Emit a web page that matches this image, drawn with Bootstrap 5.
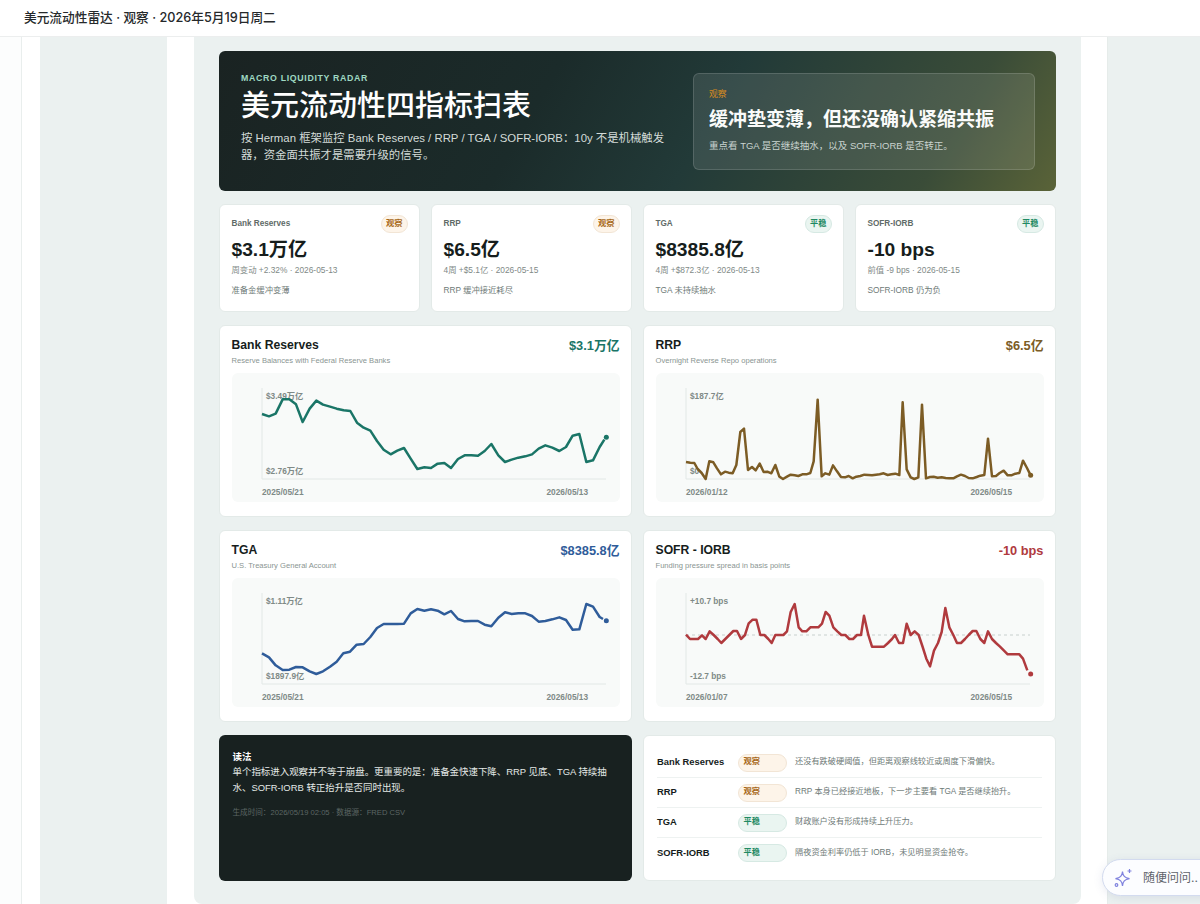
<!DOCTYPE html>
<html lang="zh-CN">
<head>
<meta charset="utf-8">
<title>美元流动性雷达</title>
<link href="https://cdn.jsdelivr.net/npm/bootstrap@5.3.0/dist/css/bootstrap.min.css" rel="stylesheet">
<style>
:root{--tint:#ebf1f0;--ink:#161d1c;--line:#e3eae8;}
html,body{height:904px;overflow:hidden;background:#fff;}
body{font-family:"Liberation Sans","Noto Sans CJK SC",sans-serif;color:var(--ink);position:relative;}
.top-strip{height:37px;padding-left:24px;border-bottom:1px solid #eceeee;font-family:Inter,"Noto Sans CJK SC",sans-serif;font-size:12.7px;font-weight:500;color:#26292b;}
.stage{height:867px;}
.rail-a{width:22px;background:#fcfdfd;border-right:1px solid #e9eeed;flex:none;}
.rail-b{width:18px;flex:none;}
.rail-c{width:127px;background:var(--tint);flex:none;}
.rail-d{width:27px;flex:none;}
.rail-e{width:26px;flex:none;}
.rail-f{flex:1;background:var(--tint);border-left:1px solid #e6ecea;}
.main-panel{width:887px;flex:none;background:var(--tint);border-radius:0 0 8px 8px;padding:14px 25px 24px;row-gap:13px;}
.hero-box{height:140px;flex:none;border-radius:6px;padding:22px 21px 22px 22px;background:linear-gradient(120deg,#1a2322 0%,#1b2b2a 38%,#223a38 58%,#3a4c38 85%,#5a6338 100%);color:#fff;gap:27px;}
.hero-left{width:425px;flex:none;padding-bottom:4.500px;}
.hero-kicker{font-size:8.800px;font-weight:700;letter-spacing:.66px;color:#9fd9c2;line-height:10px;margin-bottom:4px;}
.hero-title{font-size:29px;font-weight:500;line-height:38px;margin:0 0 5px;white-space:nowrap;font-family:"Liberation Sans","Noto Sans CJK SC",sans-serif;}
.hero-text{font-size:11.380px;line-height:17px;color:#d3dbd8;margin:0;}
.state-box{flex:1;border-radius:6px;border:1px solid rgba(255,255,255,.14);background:rgba(255,255,255,.1);padding:13px 15px;height:97px;}
.state-tag{font-size:8.800px;color:#d68a21;line-height:14px;}
.state-title{font-size:19px;font-weight:700;line-height:26px;margin-top:6px;color:#fafbfa;}
.state-note{font-size:9.500px;line-height:14px;color:#c9d3cf;margin-top:6px;}
.kpi-grid{display:grid;grid-template-columns:repeat(4,1fr);gap:11px;}
.tile{background:#fff;border:1px solid var(--line);border-radius:6px;}
.kpi-tile{height:108px;padding:10px 11px 0 11.500px;}
.kpi-name{font-size:8.200px;font-weight:700;color:#5f6b68;}
.kpi-value{font-size:19.200px;font-weight:700;line-height:24px;margin-top:5px;color:#161d1c;}
.kpi-sub{font-size:8.350px;color:#7f8a87;line-height:12px;margin-top:2px;}
.kpi-note{font-size:8.300px;color:#6e7a77;line-height:12px;margin-top:8px;}
.tag-pill{display:inline-flex;align-items:center;border-radius:999px;border:1px solid;font-size:8.200px;font-weight:700;height:18px;padding:0 4.500px;}
.tag-watch{background:#fdf4e9;border-color:#f2e5d5;color:#a8691a;}
.tag-calm{background:#eaf5f1;border-color:#d6e9e3;color:#1f8a63;}
.chart-grid{display:grid;grid-template-columns:repeat(2,1fr);gap:13px 11px;}
.chart-tile{height:192px;padding:11px 11.500px 0;}
.chart-name{font-size:12.200px;font-weight:700;line-height:16px;color:#161d1c;}
.chart-desc{font-size:7.600px;color:#8a9592;line-height:10px;margin-top:3px;}
.chart-num{font-size:12.800px;font-weight:700;line-height:18px;}
.plot-box{display:block;width:388px;height:129px;border-radius:6px;background:#f8faf9;margin-top:7px;}
.plot-box text{font-family:"Liberation Sans","Noto Sans CJK SC",sans-serif;font-size:8.300px;font-weight:700;fill:#7f8a87;}
.bottom-grid{display:grid;grid-template-columns:repeat(2,1fr);gap:11px;height:145px;}
.read-box{background:#182120;border-radius:6px;padding:14px 16px 14px 13.500px;color:#e4e9e7;font-size:9.450px;line-height:16px;}
.read-box strong{display:block;color:#fff;font-size:9.500px;line-height:15px;}
.read-meta{font-size:7.600px;color:#5c6664;line-height:12px;margin-top:11px;}
.sum-tile{padding:12px 13px;}
.sum-row{height:30px;display:grid;grid-template-columns:73px 49px 1fr;column-gap:8px;align-items:center;border-bottom:1px solid #eef2f1;}
.sum-row:last-child{border-bottom:0;}
.sum-name{font-size:9.400px;font-weight:700;color:#161d1c;}
.sum-text{font-size:8.200px;color:#6e7a77;}
.sum-row .tag-pill{justify-content:flex-start;}
.ask-pill{position:absolute;left:1102px;top:859px;width:130px;height:37px;border-radius:19px 0 0 19px;background:#fcfdff;border:1px solid #d3dbef;box-shadow:0 2px 10px rgba(70,90,150,.12);padding-left:11px;gap:9px;color:#5f646b;font-size:12px;font-family:Inter,"Noto Sans CJK SC",sans-serif;white-space:nowrap;}
</style>
</head>
<body>
<div class="top-strip d-flex align-items-center">美元流动性雷达 · 观察 · 2026年5月19日周二</div>
<div class="stage d-flex">
  <div class="rail-a"></div><div class="rail-b"></div><div class="rail-c"></div><div class="rail-d"></div>
  <main class="main-panel d-flex flex-column">
    <section class="hero-box d-flex align-items-center">
      <div class="hero-left">
        <div class="hero-kicker">MACRO LIQUIDITY RADAR</div>
        <h1 class="hero-title">美元流动性四指标扫表</h1>
        <p class="hero-text">按 Herman 框架监控 Bank Reserves / RRP / TGA / SOFR-IORB：10y 不是机械触发器，资金面共振才是需要升级的信号。</p>
      </div>
      <div class="state-box">
        <div class="state-tag">观察</div>
        <div class="state-title">缓冲垫变薄，但还没确认紧缩共振</div>
        <div class="state-note">重点看 TGA 是否继续抽水，以及 SOFR-IORB 是否转正。</div>
      </div>
    </section>

    <section class="kpi-grid">
      <div class="tile kpi-tile">
        <div class="d-flex justify-content-between align-items-center"><span class="kpi-name">Bank Reserves</span><span class="tag-pill tag-watch">观察</span></div>
        <div class="kpi-value">$3.1万亿</div>
        <div class="kpi-sub">周变动 +2.32% · 2026-05-13</div>
        <div class="kpi-note">准备金缓冲变薄</div>
      </div>
      <div class="tile kpi-tile">
        <div class="d-flex justify-content-between align-items-center"><span class="kpi-name">RRP</span><span class="tag-pill tag-watch">观察</span></div>
        <div class="kpi-value">$6.5亿</div>
        <div class="kpi-sub">4周 +$5.1亿 · 2026-05-15</div>
        <div class="kpi-note">RRP 缓冲接近耗尽</div>
      </div>
      <div class="tile kpi-tile">
        <div class="d-flex justify-content-between align-items-center"><span class="kpi-name">TGA</span><span class="tag-pill tag-calm">平稳</span></div>
        <div class="kpi-value">$8385.8亿</div>
        <div class="kpi-sub">4周 +$872.3亿 · 2026-05-13</div>
        <div class="kpi-note">TGA 未持续抽水</div>
      </div>
      <div class="tile kpi-tile">
        <div class="d-flex justify-content-between align-items-center"><span class="kpi-name">SOFR-IORB</span><span class="tag-pill tag-calm">平稳</span></div>
        <div class="kpi-value">-10 bps</div>
        <div class="kpi-sub">前值 -9 bps · 2026-05-15</div>
        <div class="kpi-note">SOFR-IORB 仍为负</div>
      </div>
    </section>

    <section class="chart-grid">
      <div class="tile chart-tile">
        <div class="d-flex justify-content-between"><div><div class="chart-name">Bank Reserves</div><div class="chart-desc">Reserve Balances with Federal Reserve Banks</div></div><div class="chart-num" style="color:#1a7567">$3.1万亿</div></div>
        <svg class="plot-box" viewBox="0 0 388 129">
          <text x="34" y="26">$3.49万亿</text><text x="34" y="100.500">$2.76万亿</text>
          <text x="30" y="122">2025/05/21</text><text x="314.500" y="122">2026/05/13</text>
          <path d="M30 15V106H374" fill="none" stroke="#e2e8e6" stroke-width="1"/>
          <g transform="scale(.33333) translate(-65 -533)">
            <polyline fill="none" stroke="#1a7567" stroke-width="7.500" stroke-linejoin="round" points="155,656 176,663 196,655 217,612 237,612 257,627 277,680 298,640 318,616 338,628 359,634 379,640 400,645 420,647 440,682 460,697 480,706 500,737 520,763 541,777 561,766 581,758 601,790 621,821 642,816 662,818 682,805 702,803 722,818 743,791 763,780 783,780 803,781 823,767 843,746 864,780 884,800 904,793 924,787 945,783 965,777 985,760 1005,750 1026,757 1047,767 1067,755 1087,721 1107,716 1128,800 1148,795 1168,755 1182,733"/>
            <circle cx="1188" cy="726" r="7.500" fill="#1a7567"/>
          </g>
        </svg>
      </div>
      <div class="tile chart-tile">
        <div class="d-flex justify-content-between"><div><div class="chart-name">RRP</div><div class="chart-desc">Overnight Reverse Repo operations</div></div><div class="chart-num" style="color:#7c5c25">$6.5亿</div></div>
        <svg class="plot-box" viewBox="0 0 388 129">
          <text x="34" y="26">$187.7亿</text><text x="34" y="100.500">$0</text>
          <text x="30" y="122">2026/01/12</text><text x="314.500" y="122">2026/05/15</text>
          <path d="M30 15V106H374" fill="none" stroke="#e2e8e6" stroke-width="1"/>
          <g transform="scale(.33333) translate(-47 -145)">
            <polyline fill="none" stroke="#7c5c25" stroke-width="7.500" stroke-linejoin="round" points="137,412 150,414 162,415 172,433 184,445 196,463 207,410 219,413 230,431 242,449 254,441 265,444 277,446 288,421 300,322 311,312 323,436 335,427 346,437 358,417 370,442 381,441 393,446 405,421 417,456 428,463 440,456 451,450 463,452 474,454 486,449 498,449 510,445 520,410 532,225 544,455 555,446 567,450 578,422 590,440 602,457 614,458 625,454 637,461 648,456 660,454 672,450 684,451 695,452 707,450 718,449 730,446 742,451 753,449 765,447 777,451 787,233 799,434 811,458 822,463 834,458 845,240 857,461 869,457 880,456 892,459 904,458 916,460 927,461 939,461 950,455 962,450 974,454 985,460 997,461 1009,457 1020,453 1032,451 1043,342 1055,455 1067,454 1078,445 1090,438 1102,452 1113,452 1125,447 1137,445 1148,408 1160,430 1171,452"/>
            <circle cx="1171" cy="452" r="7.500" fill="#7c5c25"/>
          </g>
        </svg>
      </div>
      <div class="tile chart-tile">
        <div class="d-flex justify-content-between"><div><div class="chart-name">TGA</div><div class="chart-desc">U.S. Treasury General Account</div></div><div class="chart-num" style="color:#2f5c9a">$8385.8亿</div></div>
        <svg class="plot-box" viewBox="0 0 388 129">
          <text x="34" y="26">$1.11万亿</text><text x="34" y="100.500">$1897.9亿</text>
          <text x="30" y="122">2025/05/21</text><text x="314.500" y="122">2026/05/13</text>
          <path d="M30 15V106H374" fill="none" stroke="#e2e8e6" stroke-width="1"/>
          <g transform="scale(.33333) translate(-65 -158)">
            <polyline fill="none" stroke="#2f5c9a" stroke-width="7.500" stroke-linejoin="round" points="155,384 176,396 196,420 217,434 237,433 257,425 277,426 298,438 318,446 338,438 359,424 379,409 399,384 419,379 439,358 460,356 480,335 500,308 520,296 541,296 561,296 581,295 601,264 621,251 642,256 662,252 682,256 702,267 722,257 743,281 763,288 783,287 803,287 823,298 843,303 864,277 884,261 904,266 924,264 945,264 965,272 985,289 1005,287 1026,282 1047,276 1067,284 1087,313 1107,312 1128,236 1148,244 1168,275 1178,281"/>
            <circle cx="1188" cy="286" r="7.500" fill="#2f5c9a"/>
          </g>
        </svg>
      </div>
      <div class="tile chart-tile">
        <div class="d-flex justify-content-between"><div><div class="chart-name">SOFR - IORB</div><div class="chart-desc">Funding pressure spread in basis points</div></div><div class="chart-num" style="color:#b03a3e">-10 bps</div></div>
        <svg class="plot-box" viewBox="0 0 388 129">
          <text x="34" y="26">+10.7 bps</text><text x="34" y="100.500">-12.7 bps</text>
          <text x="30" y="122">2026/01/07</text><text x="314.500" y="122">2026/05/15</text>
          <path d="M30 15V106H374" fill="none" stroke="#e2e8e6" stroke-width="1"/>
          <path d="M30 57H374" fill="none" stroke="#c8d0ce" stroke-width="1" stroke-dasharray="3 3"/>
          <g transform="scale(.33333) translate(-47 -158)">
            <polyline fill="none" stroke="#b03a3e" stroke-width="7.500" stroke-linejoin="round" points="137,328 149,341 161,341 173,341 185,330 196,341 208,318 220,329 232,341 243,353 255,341 267,329 279,317 290,317 302,341 314,329 325,294 337,283 348,283 360,329 372,329 384,341 394,353 405,329 417,329 429,329 440,318 451,260 463,236 475,306 486,318 498,318 510,306 522,306 534,306 545,295 556,260 567,271 579,306 591,318 603,329 615,329 627,341 638,341 650,329 662,329 671,271 684,329 695,364 707,364 719,364 731,364 743,353 755,341 764,329 776,353 788,353 799,295 811,329 823,318 835,329 847,365 858,400 869,423 881,376 893,353 904,320 915,248 927,306 939,329 950,353 962,353 974,341 985,329 997,317 1008,317 1020,341 1032,353 1043,318 1055,341 1067,353 1079,364 1091,376 1102,387 1114,387 1125,387 1137,387 1148,400 1161,435"/>
            <circle cx="1171" cy="446" r="7.500" fill="#b03a3e"/>
          </g>
        </svg>
      </div>
    </section>

    <section class="bottom-grid">
      <div class="read-box">
        <strong>读法</strong>
        单个指标进入观察并不等于崩盘。更重要的是：准备金快速下降、RRP 见底、TGA 持续抽水、SOFR-IORB 转正抬升是否同时出现。
        <div class="read-meta">生成时间：2026/05/19 02:05 · 数据源：FRED CSV</div>
      </div>
      <div class="tile sum-tile">
        <div class="sum-row"><span class="sum-name">Bank Reserves</span><span class="tag-pill tag-watch">观察</span><span class="sum-text">还没有跌破硬阈值，但距离观察线较近或周度下滑偏快。</span></div>
        <div class="sum-row"><span class="sum-name">RRP</span><span class="tag-pill tag-watch">观察</span><span class="sum-text">RRP 本身已经接近地板，下一步主要看 TGA 是否继续抬升。</span></div>
        <div class="sum-row"><span class="sum-name">TGA</span><span class="tag-pill tag-calm">平稳</span><span class="sum-text">财政账户没有形成持续上升压力。</span></div>
        <div class="sum-row"><span class="sum-name">SOFR-IORB</span><span class="tag-pill tag-calm">平稳</span><span class="sum-text">隔夜资金利率仍低于 IORB，未见明显资金抢夺。</span></div>
      </div>
    </section>
  </main>
  <div class="rail-e"></div><div class="rail-f"></div>
</div>
<div class="ask-pill d-flex align-items-center">
  <svg width="20" height="20" viewBox="0 0 20 20" fill="none" stroke="#7f82de" stroke-width="1.200"><path d="M8.500 3.500C9 8 10.500 9.800 15.500 10.700C10.500 11.600 9 13.400 8.500 18C8 13.400 6.500 11.600 1.500 10.700C6.500 9.800 8 8 8.500 3.500Z"/><path d="M15.500 1V5M13.500 3H17.500"/><circle cx="2.500" cy="17" r="1.300"/></svg>
  <span>随便问问..</span>
</div>
</body>
</html>
